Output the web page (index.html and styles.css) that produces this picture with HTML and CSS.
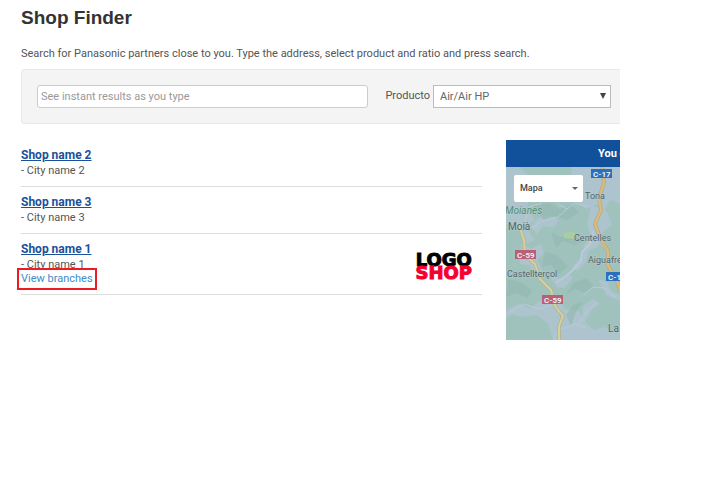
FILE: index.html
```html
<!DOCTYPE html>
<html lang="en">
<head>
<meta charset="utf-8">
<title>Shop Finder</title>
<link rel="stylesheet" href="styles.css">
</head>
<body>
<main class="page">
  <h1 class="title">Shop Finder</h1>
  <p class="intro">Search for Panasonic partners close to you. Type the address, select product and ratio and press search.</p>
  <form class="search">
    <input class="search-input" type="text" aria-label="Address" placeholder="See instant results as you type">
    <div class="product">
      <label for="product">Producto</label>
      <div class="select-wrap">
        <select id="product"><option>Air/Air HP</option></select>
        <svg class="select-arrow" width="6" height="6" viewBox="0 0 6 6" aria-hidden="true"><path d="M0 0H6L3 6Z" fill="#444"/></svg>
      </div>
    </div>
  </form>
  <div class="content">
    <ul class="shops">
      <li class="shop"><div><a class="shop-name" href="#">Shop name 2</a><div class="city">- City name 2</div></div></li>
      <li class="shop"><div><a class="shop-name" href="#">Shop name 3</a><div class="city">- City name 3</div></div></li>
      <li class="shop">
        <div><a class="shop-name" href="#">Shop name 1</a><div class="city">- City name 1</div><a class="branches" href="#">View branches</a></div>
        <div class="logo"><span>LOGO</span><span class="logo-red">SHOP</span></div>
      </li>
    </ul>
    <section class="map-panel">
      <div class="map-head">You c</div>
      <div class="map">
        <svg class="map-art" viewBox="0 0 114 173" preserveAspectRatio="xMinYMin slice" aria-label="Map">
          <rect width="114" height="173" fill="#9fc2bd"/>
          <g fill="#adc4ce">
            <path d="M0 0H14L22 9 15 18 24 31 20 42 29 52 21 61 28 73 18 78 13 64 5 56 0 58Z"/>
            <path d="M65 0H114V37L104 33 98 44 90 37 81 42 70 34 74 22 66 16Z"/>
            <path d="M30 52L42 48 53 53 48 61 37 59 31 67 25 60Z"/>
            <path d="M85 38L101 45 106 58 96 66 91 80 83 84 79 96 71 104 67 99 76 89 78 78 86 70 81 58Z"/>
            <path d="M15 76L25 82 35 76 38 86 31 93 38 107 32 111 23 98 14 97Z"/>
            <path d="M44 109L56 112 63 107 67 111 58 121 51 120Z"/>
            <path d="M0 143L13 137 24 141 34 134 47 137 52 130 59 142 73 144 80 158 77 173H47L42 157 31 148 16 150 6 147 0 151Z"/>
            <path d="M77 139L87 132 94 137 87 141 79 155 88 163 98 160 114 166V173H75Z"/>
            <path d="M92 112L101 115 106 125 114 128V134L100 128Z"/>
          </g>
          <g fill="#93b9b1" opacity=".65">
            <path d="M27 39L43 36 54 42 66 38 73 46 61 53 48 49 38 53Z"/>
            <path d="M45 65L55 70 65 65 77 74 69 78 57 74 50 81Z"/>
            <path d="M2 112L14 115 26 123 22 131 10 126 0 130Z"/>
            <path d="M67 116L80 111 88 119 78 126 69 122 60 128Z"/>
            <path d="M39 85L51 88 62 99 53 107 45 98 36 100Z"/>
            <path d="M60 148L68 137 77 135 70 145 65 159Z"/>
          </g>
          <path d="M57 67L66 64 71 68 68 72 58 71Z" fill="#a9cda0"/>
          <g fill="none" stroke="#b9cbd8" stroke-linecap="round" stroke-linejoin="round">
            <path stroke-width="1" d="M13 60L20 52 23 40 34 37 40 27 52 37 61 42 69 36 82 40M26 61L36 54 52 50 62 41M48 173L53 163 69 157 80 161M2 146L18 137 33 142 49 137"/>
            <path stroke-width="2" d="M87 65L84 77 76 85 75 94 67 103 60 109 51 115"/>
            <path stroke-width="1" d="M78 128L87 120 99 121 109 130M73 157L80 145 91 135M91 73L99 82 105 96"/>
          </g>
          <g fill="none" stroke-linejoin="round">
            <path stroke="#b4b79b" stroke-width="4" d="M13 58L18 73 19 88 29 97 34 112 45 123 49 139 57 149 53 159 53 173"/>
            <path stroke="#d3d1a0" stroke-width="2" d="M13 58L18 73 19 88 29 97 34 112 45 123 49 139 57 149 53 159 53 173"/>
            <path stroke="#b8ad8d" stroke-width="4" d="M96 0L98 16 93 31 95 43 89 57 95 73 102 84 102 99 110 111 114 123"/>
            <path stroke="#ddbb79" stroke-width="2" d="M96 0L98 16 93 31 95 43 89 57 95 73 102 84 102 99 110 111 114 123"/>
          </g>
          <g class="signs">
            <rect x="85" y="2" width="21" height="9" fill="#2c70bd"/><text x="87" y="10">C-17</text>
            <rect x="9" y="83" width="21" height="9" fill="#b96076"/><text x="11" y="91">C-59</text>
            <rect x="36" y="128" width="21" height="9" fill="#b96076"/><text x="38" y="136">C-59</text>
            <rect x="100" y="105" width="21" height="9" fill="#2c70bd"/><text x="102" y="113">C-17</text>
          </g>
          <g class="places">
            <text x="79" y="32">Tona</text>
            <text class="region" x="-1" y="47">Moianès</text>
            <text class="town" x="2" y="63">Moià</text>
            <text x="68" y="74">Centelles</text>
            <text x="82" y="96">Aiguafreda</text>
            <text x="1" y="110">Castellterçol</text>
            <text class="town" x="102" y="165">La</text>
          </g>
        </svg>
        <button class="map-type" type="button">Mapa<svg width="6" height="3" viewBox="0 0 6 3" aria-hidden="true"><path d="M0 0H6L3 3Z" fill="#666"/></svg></button>
      </div>
    </section>
  </div>
</main>
</body>
</html>
```
FILE: styles.css
```css
* { box-sizing: border-box; }
body {
  margin: 0;
  background: #fff;
  color: #555;
  font: 11px/15px Roboto, Arial, sans-serif;
}
.page { padding: 6px 90px 0 21px; }
.title {
  margin: 0;
  color: #333;
  font-family: "Liberation Sans", Arial, sans-serif;
  font-size: 19px;
  line-height: 24px;
}
.intro { margin: 16px 0 8px; }
.search {
  display: flex;
  gap: 17px;
  padding: 15px 9px 15px 15px;
  border: 1px solid #e8e8e8;
  border-right: 0;
  border-radius: 4px 0 0 4px;
  background: #f4f4f4;
}
.search-input {
  flex: 1;
  min-width: 0;
  height: 23px;
  padding: 0 3px;
  border: 1px solid #ccc;
  border-radius: 3px;
  background: #fff;
  color: #555;
  font: inherit;
}
.search-input::placeholder { color: #999; opacity: 1; }
.product { display: flex; gap: 3px; }
.product label { padding-top: 3px; }
.select-wrap { position: relative; width: 178px; }
.select-wrap select {
  width: 100%;
  height: 23px;
  padding: 0 6px;
  border: 1px solid #bbb;
  border-radius: 0;
  background: #fff;
  color: #666;
  font: inherit;
  appearance: none;
}
.select-arrow { position: absolute; top: 8px; right: 5px; pointer-events: none; }
.content { display: flex; gap: 24px; margin-top: 16px; }
.shops { flex: 1; margin: 0; padding: 0; list-style: none; }
.shop {
  display: flex;
  justify-content: space-between;
  padding: 8px 0;
  border-bottom: 1px solid #ddd;
}
.shop-name {
  display: block;
  color: #1b509a;
  font-size: 12px;
  font-weight: bold;
}
.branches {
  display: block;
  width: fit-content;
  color: #428bca;
  line-height: 14px;
  text-decoration: none;
  outline: 2px solid #ed1c24;
  outline-offset: 2px;
}
.logo {
  align-self: center;
  display: grid;
  justify-items: center;
  margin-right: 10px;
  padding-top: 4px;
  color: #000;
  font: bold 18px/13px "DejaVu Sans", sans-serif;
  -webkit-text-stroke: 1px currentColor;
}
.logo-red { color: #f5002f; }
.map-panel { width: 114px; overflow: hidden; }
.map-head {
  padding: 6px 0 6px 92px;
  background: #11509b;
  color: #fff;
  font-weight: bold;
  white-space: nowrap;
}
.map { position: relative; }
.map-art { display: block; width: 100%; }
.map-type {
  position: absolute;
  top: 8px;
  left: 8px;
  display: flex;
  align-items: center;
  justify-content: space-between;
  width: 69px;
  height: 27px;
  padding: 0 5px 0 6px;
  border: 0;
  border-radius: 2px;
  background: #fff;
  color: #444;
  font: 500 9px/15px Roboto, sans-serif;
}
.signs text { fill: #e8eef5; font: bold 8px Roboto, sans-serif; }
.places text {
  fill: #51636a;
  stroke: #b4cdca;
  stroke-width: 1px;
  paint-order: stroke;
  font: 9px Roboto, sans-serif;
}
.places .town { font-size: 10px; }
.places .region { fill: #528d78; font-size: 10px; font-style: italic; }
```
